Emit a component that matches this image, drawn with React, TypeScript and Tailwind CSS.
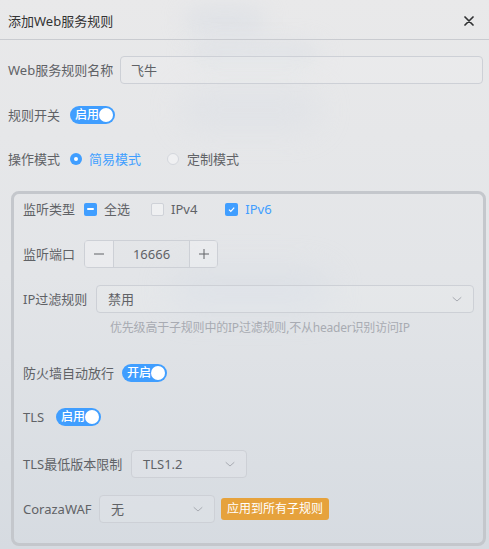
import React from "react";

const FONT = { fontFamily: '"Noto Sans","Noto Sans CJK SC",sans-serif' };

function Switch({ text, className = "" }: { text: string; className?: string }) {
  return (
    <div
      className={`relative flex h-[18px] w-[45px] items-center rounded-full bg-[#409eff] pl-[5px] ${className}`}
    >
      <span className="text-[12px] leading-none font-medium text-white">{text}</span>
      <span className="absolute right-[2px] top-[2px] h-[14px] w-[14px] rounded-full bg-white" />
    </div>
  );
}

function Chevron({ className = "" }: { className?: string }) {
  return (
    <svg className={className} width="12" height="12" viewBox="0 0 12 12" fill="none">
      <path d="M2 4.5 L6 8 L10 4.5" stroke="#a8abb2" strokeWidth="1" strokeLinecap="round" strokeLinejoin="round" />
    </svg>
  );
}

function Select({ value, className = "" }: { value: string; className?: string }) {
  return (
    <div
      className={`flex h-[28px] items-center justify-between rounded-[4px] border border-[#cdd0d6] bg-white/10 pl-[11px] pr-[10px] ${className}`}
    >
      <span className="text-[13px] leading-none text-[#606266]">{value}</span>
      <Chevron />
    </div>
  );
}

function Label({ text, w }: { text: string; w: string }) {
  return <div className={`${w} shrink-0 text-[13px] leading-none text-[#606266]`}>{text}</div>;
}

export default function App() {
  return (
    <div
      className="relative h-[549px] w-[489px] overflow-hidden bg-gradient-to-b from-[#e9e9ea] via-[#e3e5e8] to-[#d6dbe1]"
      style={FONT}
    >
      {/* blurred background blobs */}
      <div className="pointer-events-none absolute left-[185px] top-[8px] h-[24px] w-[80px] rounded-full bg-[#d3d9e2] opacity-50 blur-md" />
      <div className="pointer-events-none absolute left-[190px] top-[45px] h-[20px] w-[130px] rounded-full bg-[#d5dbe3] opacity-50 blur-md" />
      <div className="pointer-events-none absolute left-[180px] top-[90px] h-[40px] w-[140px] rounded-full bg-[#d7dce4] opacity-40 blur-lg" />
      <div className="pointer-events-none absolute left-[170px] top-[270px] h-[40px] w-[160px] rounded-full bg-[#d6dce4] opacity-50 blur-lg" />

      <div className="relative flex flex-col">
        {/* header */}
        <div className="flex h-[40px] items-center justify-between border-b border-[#c9cbd0] pl-[8px] pr-[15px] pt-[3px]">
          <span className="text-[13px] leading-none text-[#333]">添加Web服务规则</span>
          <svg width="10" height="10" viewBox="0 0 10 10">
            <path d="M1 1 L9 9 M9 1 L1 9" stroke="#303133" strokeWidth="1.7" strokeLinecap="round" />
          </svg>
        </div>

        {/* body */}
        <div className="flex flex-col px-[8px]">
          <div className="mt-[16px] flex h-[28px] items-center">
            <Label text="Web服务规则名称" w="w-[112px]" />
            <div className="mr-[-2px] flex h-[28px] flex-1 items-center rounded-[4px] border border-[#cdd0d6] bg-white/10 pl-[10px]">
              <span className="text-[13px] leading-none text-[#606266]">飞牛</span>
            </div>
          </div>

          <div className="mt-[17px] flex h-[28px] items-center">
            <Label text="规则开关" w="w-[62px]" />
            <Switch text="启用" />
          </div>

          <div className="mt-[16px] flex h-[28px] items-center">
            <Label text="操作模式" w="w-[62px]" />
            <div className="flex items-center">
              <span className="flex h-[12px] w-[12px] items-center justify-center rounded-full bg-[#409eff]">
                <span className="h-[4px] w-[4px] rounded-full bg-white" />
              </span>
              <span className="ml-[7px] text-[13px] leading-none text-[#409eff]">简易模式</span>
            </div>
            <div className="ml-[26px] flex items-center">
              <span className="h-[12px] w-[12px] rounded-full border border-[#d4d7dd] bg-white/40" />
              <span className="ml-[8px] text-[13px] leading-none text-[#606266]">定制模式</span>
            </div>
          </div>
        </div>

        {/* panel */}
        <div className="mb-[4px] ml-[11px] mr-[3px] mt-[18px] flex flex-col rounded-[8px] border-[3px] border-[#c4c7cc] pb-[20px] pl-[9px] pr-[9px] pt-[5px]">
          <div className="flex h-[20px] items-center">
            <Label text="监听类型" w="w-[61px]" />
            <div className="flex items-center">
              <span className="flex h-[13px] w-[13px] items-center justify-center rounded-[2px] bg-[#409eff]">
                <span className="h-[2px] w-[7px] rounded-[1px] bg-white" />
              </span>
              <span className="ml-[7px] text-[13px] leading-none text-[#606266]">全选</span>
            </div>
            <div className="ml-[21px] flex items-center">
              <span className="h-[13px] w-[13px] rounded-[2px] border border-[#cfd2d8] bg-white/40" />
              <span className="ml-[7px] text-[13px] leading-none text-[#606266]">IPv4</span>
            </div>
            <div className="ml-[28px] flex items-center">
              <span className="flex h-[13px] w-[13px] items-center justify-center rounded-[2px] bg-[#409eff]">
                <svg width="9" height="9" viewBox="0 0 9 9">
                  <path d="M2 4.6 L3.8 6.4 L7.2 2.6" stroke="white" strokeWidth="1.2" fill="none" />
                </svg>
              </span>
              <span className="ml-[7px] text-[13px] leading-none text-[#409eff]">IPv6</span>
            </div>
          </div>

          <div className="mt-[21px] flex h-[28px] items-center">
            <Label text="监听端口" w="w-[61px]" />
            <div className="flex h-[28px] w-[134px] items-stretch rounded-[4px] border border-[#cdd0d6]">
              <div className="flex w-[29px] items-center justify-center border-r border-[#cdd0d6] bg-white/25">
                <svg width="12" height="12" viewBox="0 0 12 12">
                  <path d="M1 6 H11" stroke="#606266" strokeWidth="1" />
                </svg>
              </div>
              <div className="flex flex-1 items-center justify-center text-[13px] leading-none text-[#606266]">
                16666
              </div>
              <div className="flex w-[28px] items-center justify-center border-l border-[#cdd0d6] bg-white/25">
                <svg width="12" height="12" viewBox="0 0 12 12">
                  <path d="M1 6 H11 M6 1 V11" stroke="#606266" strokeWidth="1" />
                </svg>
              </div>
            </div>
          </div>

          <div className="mt-[17px] flex h-[28px] items-center">
            <Label text="IP过滤规则" w="w-[73px]" />
            <Select value="禁用" className="w-[378px]" />
          </div>
          <div className="mt-[7px] pl-[87px] text-[12px] leading-[16px] tracking-[-0.2px] text-[#a8abb2]">
            优先级高于子规则中的IP过滤规则,不从header识别访问IP
          </div>

          <div className="mt-[23px] flex h-[28px] items-center">
            <Label text="防火墙自动放行" w="w-[99px]" />
            <Switch text="开启" />
          </div>

          <div className="mt-[16px] flex h-[28px] items-center">
            <Label text="TLS" w="w-[33px]" />
            <Switch text="启用" />
          </div>

          <div className="mt-[19px] flex h-[28px] items-center">
            <Label text="TLS最低版本限制" w="w-[108px]" />
            <Select value="TLS1.2" className="w-[116px]" />
          </div>

          <div className="mt-[17px] flex h-[28px] items-center">
            <Label text="CorazaWAF" w="w-[76px]" />
            <Select value="无" className="w-[116px]" />
            <div className="ml-[6px] flex h-[22px] items-center rounded-[3px] bg-[#e6a23c] px-[6px]">
              <span className="text-[12px] leading-none text-white">应用到所有子规则</span>
            </div>
          </div>
        </div>
      </div>
    </div>
  );
}
